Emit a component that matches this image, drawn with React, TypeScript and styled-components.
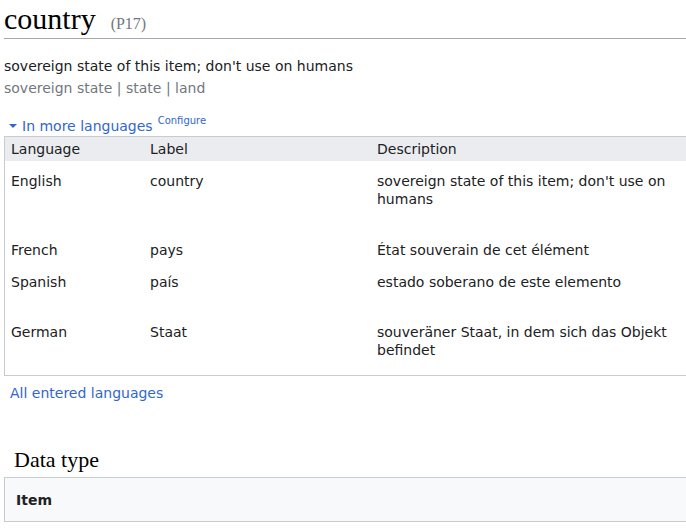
import styled, { createGlobalStyle } from "styled-components";

const GlobalStyle = createGlobalStyle`
  body {
    margin: 0;
    overflow: hidden;
    background: #fff;
    font-family: "DejaVu Sans", sans-serif;
    font-size: 14px;
    color: #202122;
  }
`;

const Page = styled.div`
  width: 1000px;
  padding: 0 0 0 4px;
`;

const Heading = styled.h1`
  margin: 0;
  height: 39px;
  box-sizing: border-box;
  padding-top: 3px;
  display: flex;
  align-items: baseline;
  gap: 15px;
  font-family: "Liberation Serif", serif;
  font-weight: normal;
  font-size: 30px;
  line-height: 32px;
  color: #000;
  border-bottom: 1px solid #a2a9b1;
`;

const PropId = styled.span`
  font-size: 16px;
  color: #72777d;
`;

const Description = styled.div`
  margin-top: 18px;
  line-height: 18px;
`;

const Aliases = styled.div`
  margin-top: 4px;
  line-height: 18px;
  color: #72777d;
`;

const Toggle = styled.div`
  margin-top: 20px;
  padding-left: 5px;
  display: flex;
  align-items: baseline;
  gap: 5px;
  color: #3366cc;
  line-height: 18px;
`;

const Arrow = styled.span`
  display: inline-block;
  width: 0;
  height: 0;
  border-left: 4px solid transparent;
  border-right: 4px solid transparent;
  border-top: 4px solid #3366cc;
  transform: translateY(-3px);
`;

const Configure = styled.span`
  font-size: 10px;
  line-height: 1;
  position: relative;
  top: -7px;
`;

const Table = styled.div`
  margin-top: 1px;
  border: 1px solid #c8ccd1;
  border-right: none;
`;

const Row = styled.div<{ $height?: number; $head?: boolean }>`
  display: grid;
  grid-template-columns: 138px 227px 320px 1fr;
  height: ${(p) => (p.$height ? `${p.$height}px` : "auto")};
  background: ${(p) => (p.$head ? "#eaecf0" : "transparent")};
`;

const Cell = styled.div<{ $head?: boolean }>`
  padding: ${(p) => (p.$head ? "3px 6px" : "11px 6px 0")};
  line-height: 18px;
  & + & {
    border-left: ${(p) => (p.$head ? "1px solid #fff" : "1px solid transparent")};
  }
`;

const Link = styled.a`
  display: block;
  margin: 8px 0 0 6px;
  color: #3366cc;
  text-decoration: none;
  line-height: 18px;
`;

const SectionTitle = styled.h2`
  margin: 45px 0 0 10px;
  font-family: "Liberation Serif", serif;
  font-weight: normal;
  font-size: 22px;
  line-height: 26px;
  color: #000;
`;

const TypeBox = styled.div`
  margin-top: 4px;
  border: 1px solid #c8ccd1;
  border-right: none;
  background: #f8f9fa;
  padding: 13px 11px 12px;
  font-weight: bold;
  line-height: 18px;
`;

const rows = [
  { lang: "English", label: "country", desc: "sovereign state of this item; don't use on humans", h: 69 },
  { lang: "French", label: "pays", desc: "État souverain de cet élément", h: 32 },
  { lang: "Spanish", label: "país", desc: "estado soberano de este elemento", h: 50 },
  { lang: "German", label: "Staat", desc: "souveräner Staat, in dem sich das Objekt befindet", h: 63 },
];

export default function App() {
  return (
    <Page>
      <GlobalStyle />
      <Heading>
        country <PropId>(P17)</PropId>
      </Heading>
      <Description>sovereign state of this item; don't use on humans</Description>
      <Aliases>sovereign state | state | land</Aliases>
      <Toggle>
        <Arrow />
        In more languages
        <Configure>Configure</Configure>
      </Toggle>
      <Table>
        <Row $head>
          <Cell $head>Language</Cell>
          <Cell $head>Label</Cell>
          <Cell $head>Description</Cell>
          <Cell $head />
        </Row>
        {rows.map((r) => (
          <Row key={r.lang} $height={r.h}>
            <Cell>{r.lang}</Cell>
            <Cell>{r.label}</Cell>
            <Cell>{r.desc}</Cell>
            <Cell />
          </Row>
        ))}
      </Table>
      <Link href="#">All entered languages</Link>
      <SectionTitle>Data type</SectionTitle>
      <TypeBox>Item</TypeBox>
    </Page>
  );
}
